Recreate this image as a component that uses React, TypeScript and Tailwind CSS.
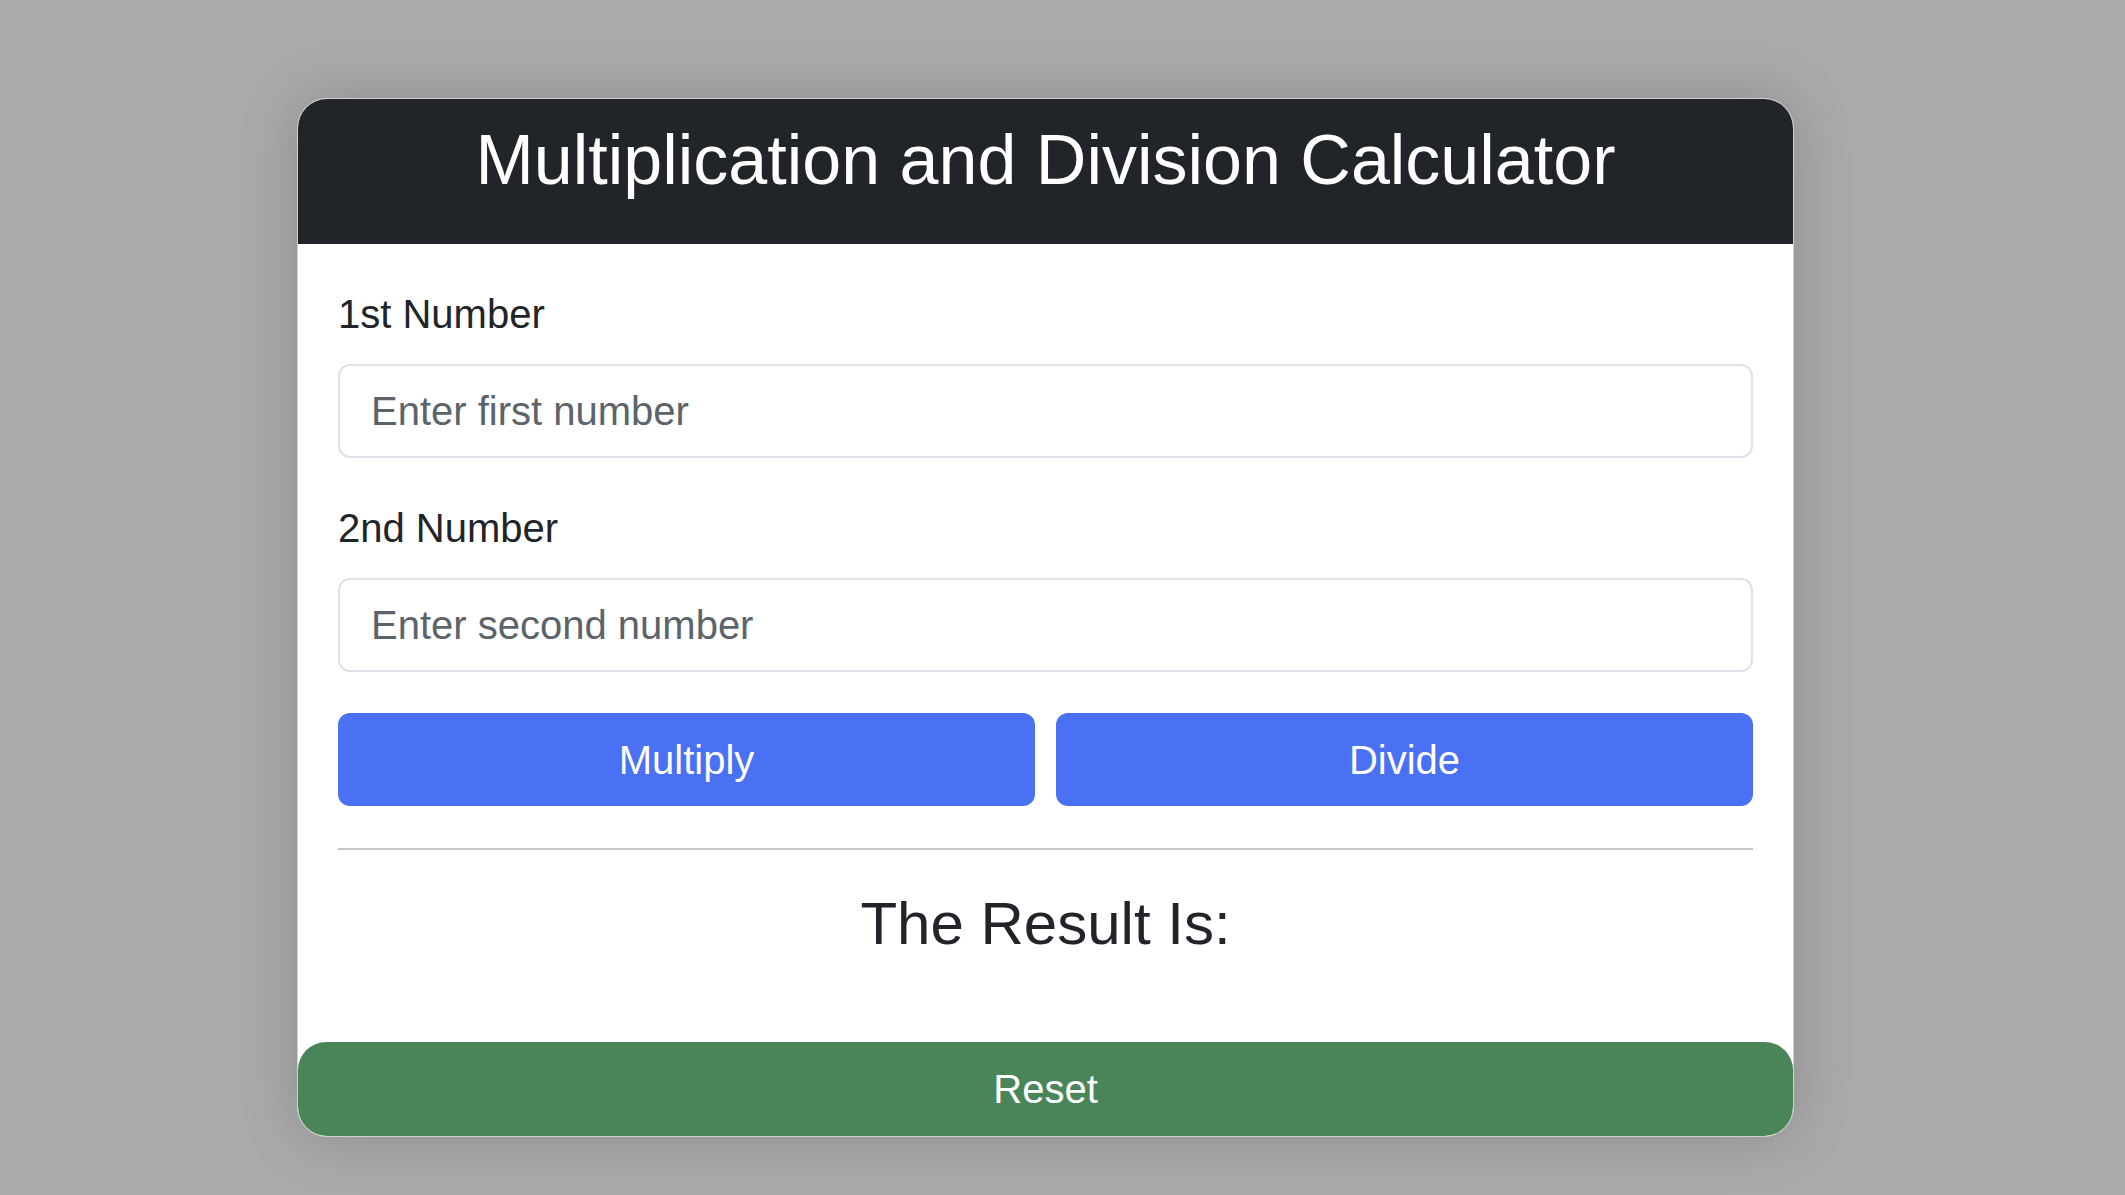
export default function App() {
  return (
    <div className="min-h-screen w-full bg-[#aaaaaa] pt-[98px] pl-[297px]" style={{ fontFamily: '"Liberation Sans", Arial, sans-serif' }}>
      <div className="w-[1497px] rounded-[30px] border border-[#d0d0d0] bg-white overflow-hidden shadow-[0_0_60px_rgba(0,0,0,0.18)]">
        {/* Header */}
        <div className="h-[145px] bg-[#212529] flex justify-center pt-[26px]">
          <h1 className="text-white text-[70px] leading-none font-normal">Multiplication and Division Calculator</h1>
        </div>

        {/* Form */}
        <div className="px-[40px] pt-[46px]">
          <label className="block text-[40px] leading-[48px] text-[#212529] mb-[26px]">1st Number</label>
          <input
            type="text"
            placeholder="Enter first number"
            className="block w-full h-[94px] rounded-[12px] border-2 border-[#dee2e6] px-[31px] text-[40px] text-[#212529] placeholder:text-[#5c636a] outline-none"
          />

          <label className="block text-[40px] leading-[48px] text-[#212529] mt-[46px] mb-[26px]">2nd Number</label>
          <input
            type="text"
            placeholder="Enter second number"
            className="block w-full h-[94px] rounded-[12px] border-2 border-[#dee2e6] px-[31px] text-[40px] text-[#212529] placeholder:text-[#5c636a] outline-none"
          />

          <div className="grid grid-cols-2 gap-[21px] mt-[41px]">
            <button className="h-[93px] rounded-[12px] bg-[#4a70f3] text-white text-[40px]">Multiply</button>
            <button className="h-[93px] rounded-[12px] bg-[#4a70f3] text-white text-[40px]">Divide</button>
          </div>

          <hr className="mt-[42px] border-0 border-t-2 border-[#c8c8c8]" />

          <div className="mt-[38px] text-center text-[60px] leading-[72px] text-[#212529]">The Result Is:</div>
        </div>

        {/* Reset */}
        <button className="mt-[82px] w-full h-[94px] rounded-[28px] bg-[#4a8559] text-white text-[40px]">Reset</button>
      </div>
    </div>
  );
}
